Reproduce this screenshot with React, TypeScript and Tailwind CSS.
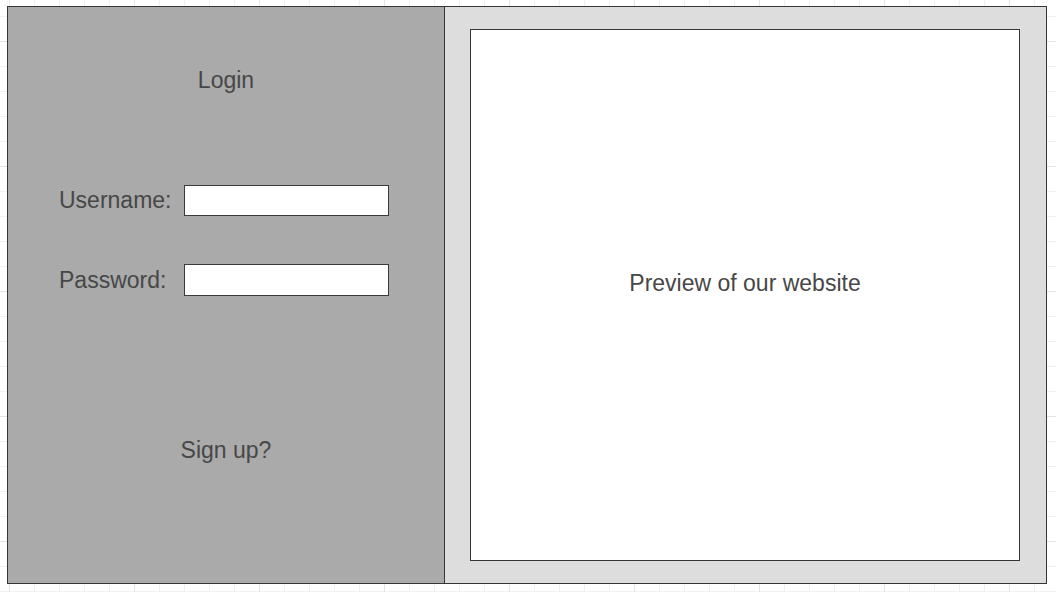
import React from "react";

const font = { fontFamily: '"Liberation Sans", Arial, sans-serif' };

const Field: React.FC<{ label: string; className?: string }> = ({ label, className }) => (
  <div className={`flex items-center pl-[51px] ${className ?? ""}`}>
    <span className="w-[125px] leading-none">{label}</span>
    <input
      type="text"
      className="w-[205px] h-full bg-white border border-[#3a3a3a] outline-none"
    />
  </div>
);

export default function App() {
  return (
    <div
      className="w-[1056px] h-[592px] pt-[6px] pl-[7px] bg-white bg-[linear-gradient(to_right,#e4e4e4_1px,transparent_1px),linear-gradient(to_bottom,#e4e4e4_1px,transparent_1px),linear-gradient(to_right,#f0f0f0_1px,transparent_1px),linear-gradient(to_bottom,#f0f0f0_1px,transparent_1px)] bg-[size:125px_125px,125px_125px,25px_25px,25px_25px] bg-[position:9px_41px,9px_41px,9px_16px,9px_16px]"
      style={font}
    >
      {/* frame */}
      <div className="flex w-[1040px] h-[578px] border border-[#363636] text-[23px] text-[#474747]">
        {/* login side */}
        <div className="w-[437px] bg-[#aaaaaa] border-r border-[#363636] flex flex-col">
          <div className="mt-[60px] h-[26px] leading-[26px] text-center">Login</div>
          <Field label="Username:" className="mt-[92px] h-[31px]" />
          <Field label="Password:" className="mt-[48px] h-[32px]" />
          <div className="mt-[141px] h-[26px] leading-[26px] text-center">Sign up?</div>
        </div>
        {/* preview side */}
        <div className="flex-1 bg-[#dddddd] pt-[22px] pl-[25px]">
          <div className="w-[550px] h-[532px] bg-white border border-[#363636] flex items-center justify-center pb-[25px]">
            <span className="leading-[26px]">Preview of our website</span>
          </div>
        </div>
      </div>
    </div>
  );
}
